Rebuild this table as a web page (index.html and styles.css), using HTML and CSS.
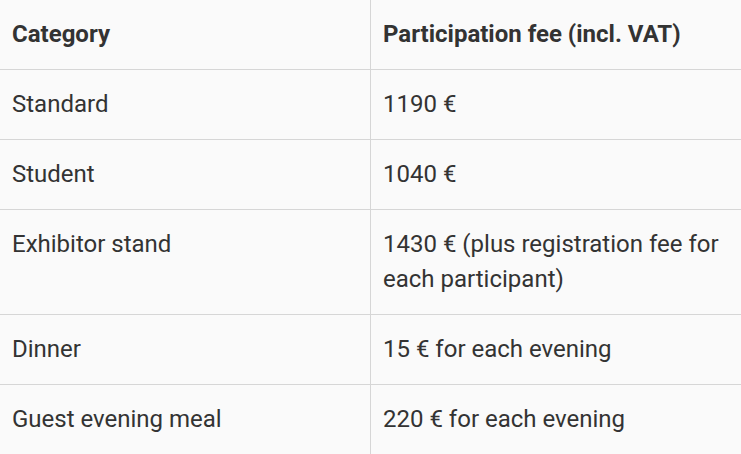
FILE: index.html
```html
<!DOCTYPE html>
<html lang="en">
<head>
<meta charset="utf-8">
<title>Fees</title>
<link rel="stylesheet" href="styles.css">
</head>
<body>
<table class="fees">
  <thead>
    <tr><th class="col-cat">Category</th><th>Participation fee (incl. VAT)</th></tr>
  </thead>
  <tbody>
    <tr><td>Standard</td><td>1190 €</td></tr>
    <tr><td>Student</td><td>1040 €</td></tr>
    <tr><td>Exhibitor stand</td><td>1430 € (plus registration fee for each participant)</td></tr>
    <tr><td>Dinner</td><td>15 € for each evening</td></tr>
    <tr><td>Guest evening meal</td><td>220 € for each evening</td></tr>
  </tbody>
</table>
</body>
</html>
```
FILE: styles.css
```css
html, body {
  margin: 0;
  padding: 0;
  background: #fafafa;
}
.fees {
  width: 741px;
  border-collapse: collapse;
  font-family: Roboto, "Liberation Sans", sans-serif;
  font-size: 24px;
  line-height: 35px;
  color: #333333;
}
.fees th, .fees td {
  text-align: left;
  vertical-align: top;
  padding: 17px 12px 17px 12px;
  border-bottom: 1px solid #d6d6d6;
}
.fees th {
  font-weight: 700;
}
.fees th:first-child, .fees td:first-child {
  width: 346px;
  border-right: 1px solid #d6d6d6;
}
```
